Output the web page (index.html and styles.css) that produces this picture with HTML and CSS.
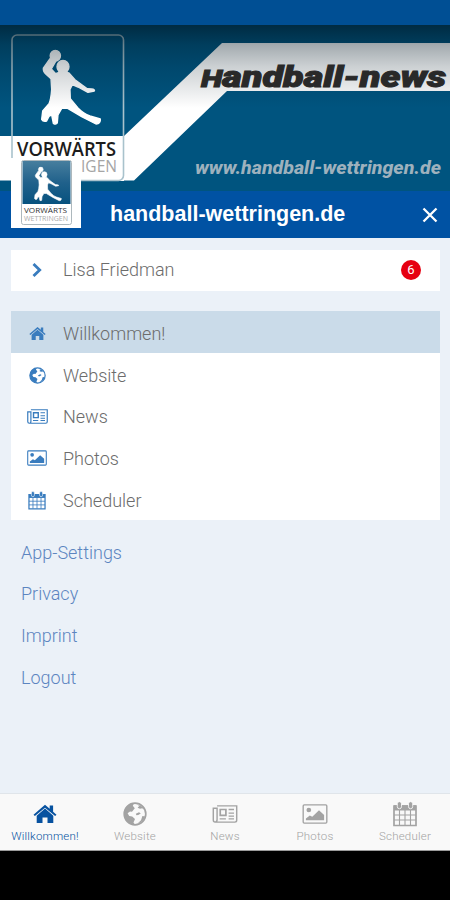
FILE: index.html
```html
<!DOCTYPE html>
<html lang="de">
<head>
<meta charset="utf-8">
<title>handball-wettringen.de</title>
<link rel="stylesheet" href="styles.css">
</head>
<body>
<svg class="defs" aria-hidden="true">
  <defs>
    <linearGradient id="shade" x1="0" y1="0" x2="0" y2="1"><stop offset="0" stop-color="#001622" stop-opacity=".65"/><stop offset=".12" stop-color="#001622" stop-opacity=".36"/><stop offset=".25" stop-color="#001622" stop-opacity=".2"/><stop offset=".5" stop-color="#001622" stop-opacity="0"/></linearGradient>
    <linearGradient id="badge" x1="0" y1="0" x2="0" y2="1"><stop offset="0" stop-color="#477e9e"/><stop offset=".5" stop-color="#20618b"/><stop offset="1" stop-color="#07527f"/></linearGradient>
    <symbol id="player" viewBox="120 147 190 230">
      <g fill="#fff" stroke="#fff" stroke-width="4" stroke-linejoin="round"><ellipse cx="166" cy="167" rx="15.5" ry="16"/><ellipse cx="189" cy="200" rx="18" ry="19"/>
      <path d="M150 176L130 204Q129 215 138 223L153 236L155 268Q153 298 147 311L128 333L125 358Q129 366 140 363L147 349L155 345L160 370Q168 375 172 369L174 345L186 324L203 325L245 350L288 372Q303 371 301 357L270 348Q250 341 234 324L211 296L210 268L217 254L234 261L264 277L283 273Q286 268 275 267L262 266L225 239L207 219L185 214L167 221L154 207L168 183Z"/></g>
    </symbol>
    <symbol id="home" viewBox="0 0 24 20"><path d="M12 4.6L3.7 11.7V19H9.5V13.4H14.5V19H20.3V11.7Z"/><path d="M12 .8L16.7 4.8V1.6H20.1V7.8L23.5 10.7L22.1 12.1L12 3.7L1.9 12.1L.5 10.7Z"/></symbol>
    <symbol id="globe" viewBox="0 0 24 24"><circle cx="12" cy="12" r="10.8" fill="none" stroke="currentColor" stroke-width="1.7"/><path d="M11 1.3C5 1.5 1 6.3 1.3 12C1.6 18 6 22.4 12 22.7L10.5 20.5L12 17L9.2 14.6L6.2 14L4.6 11.3L7 9.6L9 9.8L11.8 6.2L9.8 3.7ZM14 2.2L16.2 4.1L14.6 5.7L17 6.7L19.2 6.3L21 7.8L19.6 4.9ZM12.8 11.8L16 10.2L17.8 11.4L15.2 13L13.4 13.2ZM19.4 14L18 18.2L14.6 21.6C18.4 20.8 21.2 18.3 22.3 14.6Z"/></symbol>
    <symbol id="news" viewBox="0 0 28 20"><path d="M5.2 1H27V17Q27 19 25 19H3Q1 19 1 16.8V3.7H5.2V16.2Q5.2 19 3 19" fill="none" stroke="currentColor" stroke-width="1.6"/><path d="M8.7 5H15V11.5H8.7Z" fill="none" stroke="currentColor" stroke-width="1.9"/><path d="M18 5H24M18 9H24M18 12.3H24M8 15.4H15M18 15.4H24" fill="none" stroke="currentColor" stroke-width="1.5"/></symbol>
    <symbol id="photo" viewBox="0 0 28 22"><rect x="1" y="1" width="26" height="20" rx="1.2" fill="none" stroke="currentColor" stroke-width="1.5"/><circle cx="7.2" cy="6.6" r="2.6"/><path d="M4 18V16L8.3 12.7L11 14L18.4 7L24 12V18Z"/></symbol>
    <symbol id="calendar" viewBox="0 0 24 26"><path d="M1 5H23V24.5H1Z" fill="none" stroke="currentColor" stroke-width="1.7"/><path d="M1 4.2H23V9.5H1Z"/><path d="M6.5 9V24M12 9V24M17.5 9V24M1 14H23M1 19H23" fill="none" stroke="currentColor" stroke-width="1.1"/><rect class="ring" x="4.3" y=".7" width="4.2" height="7" rx="2"/><rect class="ring" x="15.5" y=".7" width="4.2" height="7" rx="2"/></symbol>
  </defs>
</svg>
<div class="app">
  <div class="status"></div>
  <header class="hero">
    <svg class="banner" viewBox="0 25 450 166">
      <rect y="25" width="450" height="166" fill="#00547f"/>
      <path d="M0 136H124L222 43H450V91H227L134 180.5H0Z" fill="#fff"/>
      <rect x="12" y="35" width="112" height="146" rx="5" fill="#00547f"/>
      <path d="M12 136H124V181H12Z" fill="#fff"/>
      <use href="#player" x="40" y="49" width="63.3" height="76.7"/>
      <rect x="12" y="35" width="111.5" height="145.5" rx="5" fill="none" stroke="#a9c2cc" stroke-width="1.6"/>
      <rect y="25" width="450" height="166" fill="url(#shade)"/>
      <text class="club" x="17" y="155.5" textLength="99" lengthAdjust="spacingAndGlyphs">VORWÄRTS</text>
      <text class="club-sub" x="81" y="171.5" textLength="36" lengthAdjust="spacingAndGlyphs">IGEN</text>
      <text class="news-title" x="201" y="87" textLength="245" lengthAdjust="spacingAndGlyphs"><tspan class="low-cap">H</tspan>andball-news</text>
      <text class="news-url" x="195" y="173.5" textLength="246" lengthAdjust="spacingAndGlyphs">www.handball-wettringen.de</text>
    </svg>
    <div class="titlebar">
      <h1>handball-wettringen.de</h1>
      <svg class="close" viewBox="0 0 16 16"><path d="M1.5 1.5L14.5 14.5M14.5 1.5L1.5 14.5"/></svg>
    </div>
    <svg class="avatar" viewBox="11 158 70 70">
      <rect x="11" y="158" width="70" height="70" fill="#fff"/>
      <rect x="21.5" y="160.5" width="50" height="64" rx="2" fill="#fff" stroke="#adb8bd"/>
      <rect x="22.5" y="161" width="48" height="43" fill="url(#badge)"/>
      <use href="#player" x="33" y="166.5" width="30.5" height="35"/>
      <text class="mini" x="24" y="213" textLength="43" lengthAdjust="spacingAndGlyphs">VORWÄRTS</text>
      <text class="mini pale" x="24" y="220.5" textLength="44" lengthAdjust="spacingAndGlyphs">WETTRINGEN</text>
    </svg>
  </header>
  <main>
    <div class="card user">
      <div class="row"><span class="ico"><svg class="chevron" viewBox="0 0 10 14"><path d="M1.5 1L7.7 7L1.5 13"/></svg></span><span>Lisa Friedman</span><b class="count">6</b></div>
    </div>
    <nav class="card menu">
      <div class="row active"><span class="ico"><svg width="17" height="15"><use href="#home"/></svg></span><span>Willkommen!</span></div>
      <div class="row"><span class="ico"><svg width="17" height="17"><use href="#globe"/></svg></span><span>Website</span></div>
      <div class="row"><span class="ico"><svg width="21" height="15"><use href="#news"/></svg></span><span>News</span></div>
      <div class="row"><span class="ico"><svg width="20" height="16"><use href="#photo"/></svg></span><span>Photos</span></div>
      <div class="row"><span class="ico"><svg width="18" height="19"><use href="#calendar"/></svg></span><span>Scheduler</span></div>
    </nav>
    <nav class="links"><a>App-Settings</a><a>Privacy</a><a>Imprint</a><a>Logout</a></nav>
  </main>
  <footer class="tabs">
    <div class="tab on"><span class="glyph"><svg width="24" height="20"><use href="#home"/></svg></span><span>Willkommen!</span></div>
    <div class="tab"><span class="glyph"><svg width="24" height="24"><use href="#globe"/></svg></span><span>Website</span></div>
    <div class="tab"><span class="glyph"><svg width="26" height="18"><use href="#news"/></svg></span><span>News</span></div>
    <div class="tab"><span class="glyph"><svg width="26" height="20"><use href="#photo"/></svg></span><span>Photos</span></div>
    <div class="tab"><span class="glyph"><svg width="24" height="26"><use href="#calendar"/></svg></span><span>Scheduler</span></div>
  </footer>
  <div class="system"></div>
</div>
</body>
</html>
```
FILE: styles.css
```css
* { box-sizing: border-box; }
body { margin: 0; background: #000; font-family: Roboto, sans-serif; }
svg { display: block; fill: currentColor; }
.defs { position: absolute; width: 0; height: 0; }
.app { width: 450px; height: 900px; display: flex; flex-direction: column; background: #ebf1f8; overflow: hidden; }
.status { height: 25px; background: #004f94; flex: none; }
.hero { position: relative; height: 213px; flex: none; }
.banner { width: 450px; height: 166px; }
.club { font: 600 19.5px "Open Sans", sans-serif; fill: #1c1c1c; }
.club-sub { font: 17px "Open Sans", sans-serif; fill: #a5a5a5; }
.news-title { font: italic 900 29px Roboto, sans-serif; fill: #292929; stroke: #292929; stroke-width: 1px; }
.low-cap { font-size: 24px; }
.news-url { font: italic 800 18px Roboto, sans-serif; fill: #9eb1bd; }
.titlebar { height: 47px; padding: 0 12px 0 110px; display: flex; align-items: center; justify-content: space-between; background: #0052a3; color: #fff; }
h1 { margin: 0; font: 700 21.5px/47px "Liberation Sans", sans-serif; white-space: nowrap; }
.close { width: 16px; height: 16px; fill: none; stroke: #fff; stroke-width: 2.3; margin-top: 1px; }
.avatar { position: absolute; left: 11px; top: 133px; width: 70px; height: 70px; }
.mini { font: 7px "Open Sans", sans-serif; fill: #333; }
.pale { fill: #aaa; }
main { flex: 1; padding: 11.5px 10px 0 11px; }
.card { background: #fff; }
.user { margin-bottom: 20px; }
.row { height: 41.7px; display: flex; align-items: center; font-weight: 300; font-size: 18px; color: #6c6c6c; }
.user .row { padding-bottom: 1px; }
.menu .row { padding-top: 2.6px; }
.ico { width: 52px; display: flex; justify-content: center; color: #397cbe; }
.ico + span { flex: 1; }
.chevron { width: 10px; height: 14px; fill: none; stroke: #397cbe; stroke-width: 2.8; }
.count { width: 20px; height: 20px; margin-right: 19px; border-radius: 50%; background: #e60011; color: #fff; font: 400 13px/20px Roboto, sans-serif; text-align: center; }
.active { background: #cadbe9; }
.ring { fill: currentColor; stroke: #fff; stroke-width: .8px; }
.links { padding: 12px 10px 0; display: flex; flex-direction: column; }
.links a { font-weight: 300; font-size: 18px; line-height: 41.7px; color: #5c85c0; }
.tabs { height: 58px; flex: none; display: grid; grid-template-columns: repeat(5, 90px); background: #f9f9f9; border-top: 1px solid #e0e5ea; border-bottom: 1px solid #9b9b9b; }
.tab { display: flex; flex-direction: column; align-items: center; color: #a3a3a3; font-size: 11.5px; font-weight: 300; line-height: 14px; letter-spacing: .2px; }
.glyph { height: 35px; padding-top: 5px; display: flex; align-items: center; }
.on { color: #0752a0; }
.system { height: 49px; flex: none; background: #000; }
```
